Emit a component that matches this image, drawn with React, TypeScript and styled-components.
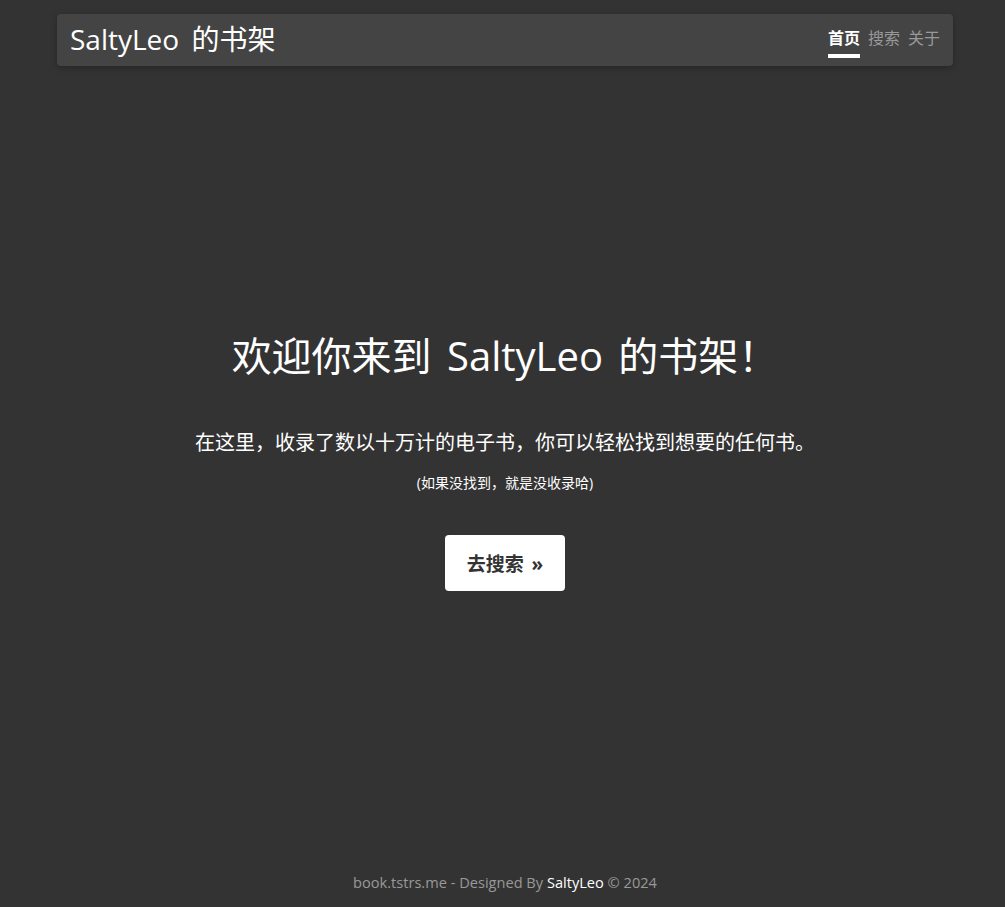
import React from "react";
import styled, { createGlobalStyle } from "styled-components";

const GlobalStyle = createGlobalStyle`
  html, body {
    margin: 0;
    padding: 0;
    background: #333333;
    height: 100%;
  }
  body {
    font-family: "Open Sans", "Noto Sans CJK SC", sans-serif;
    color: #ffffff;
  }
  #root {
    min-height: 100%;
  }
`;

const Page = styled.div`
  min-height: 907px;
  display: flex;
  flex-direction: column;
  padding-left: 5px;
  box-sizing: border-box;
`;

const NavBar = styled.header`
  width: 896px;
  height: 52px;
  margin: 14px auto 0;
  box-sizing: border-box;
  background: #444444;
  border-radius: 4px;
  box-shadow: 0 2px 6px rgba(0, 0, 0, 0.25);
  display: flex;
  align-items: center;
  justify-content: space-between;
  padding: 0 13px;
`;

const Brand = styled.a`
  font-size: 28px;
  color: #ffffff;
  text-decoration: none;
  word-spacing: 5px;
  line-height: 1;
  margin-bottom: 2px;
`;

const NavLinks = styled.nav`
  display: flex;
  gap: 8px;
  align-self: stretch;
  align-items: center;
`;

const NavLink = styled.a<{ $active?: boolean }>`
  position: relative;
  font-size: 16px;
  font-weight: ${(p) => (p.$active ? 700 : 400)};
  color: ${(p) => (p.$active ? "#ffffff" : "#999999")};
  text-decoration: none;
  line-height: 1;
  margin-bottom: 4px;
  &::after {
    content: "";
    display: ${(p) => (p.$active ? "block" : "none")};
    position: absolute;
    left: 0;
    right: 0;
    top: 24px;
    height: 4px;
    background: #ffffff;
  }
`;

const Main = styled.main`
  flex: 1;
  display: flex;
  flex-direction: column;
  align-items: center;
  padding-top: 264px;
`;

const Title = styled.h1`
  margin: 0;
  font-size: 40px;
  font-weight: 400;
  line-height: 52px;
  word-spacing: 5px;
  color: #ffffff;
`;

const Lead = styled.p`
  margin: 47px 0 0;
  font-size: 20px;
  line-height: 28px;
  color: #ffffff;
`;

const Note = styled.small`
  display: block;
  margin-top: 16px;
  font-size: 14px;
  line-height: 20px;
  color: #ffffff;
`;

const SearchButton = styled.a`
  margin-top: 42px;
  width: 120px;
  height: 56px;
  display: flex;
  align-items: center;
  justify-content: center;
  background: #ffffff;
  color: #333333;
  border-radius: 4px;
  font-size: 19px;
  font-weight: 700;
  word-spacing: 3px;
  text-decoration: none;
`;

const Footer = styled.footer`
  text-align: center;
  font-size: 14.6px;
  color: #999999;
  padding: 0 0 15px;
  line-height: 20px;
`;

const FooterLink = styled.a`
  color: #ffffff;
  text-decoration: none;
`;

export default function App() {
  return (
    <>
      <GlobalStyle />
      <Page>
        <NavBar>
          <Brand href="#">SaltyLeo 的书架</Brand>
          <NavLinks>
            <NavLink href="#" $active>首页</NavLink>
            <NavLink href="#">搜索</NavLink>
            <NavLink href="#">关于</NavLink>
          </NavLinks>
        </NavBar>
        <Main>
          <Title>欢迎你来到 SaltyLeo 的书架！</Title>
          <Lead>在这里，收录了数以十万计的电子书，你可以轻松找到想要的任何书。</Lead>
          <Note>(如果没找到，就是没收录哈)</Note>
          <SearchButton href="#">去搜索 »</SearchButton>
        </Main>
        <Footer>
          book.tstrs.me - Designed By <FooterLink href="#">SaltyLeo</FooterLink> © 2024
        </Footer>
      </Page>
    </>
  );
}
